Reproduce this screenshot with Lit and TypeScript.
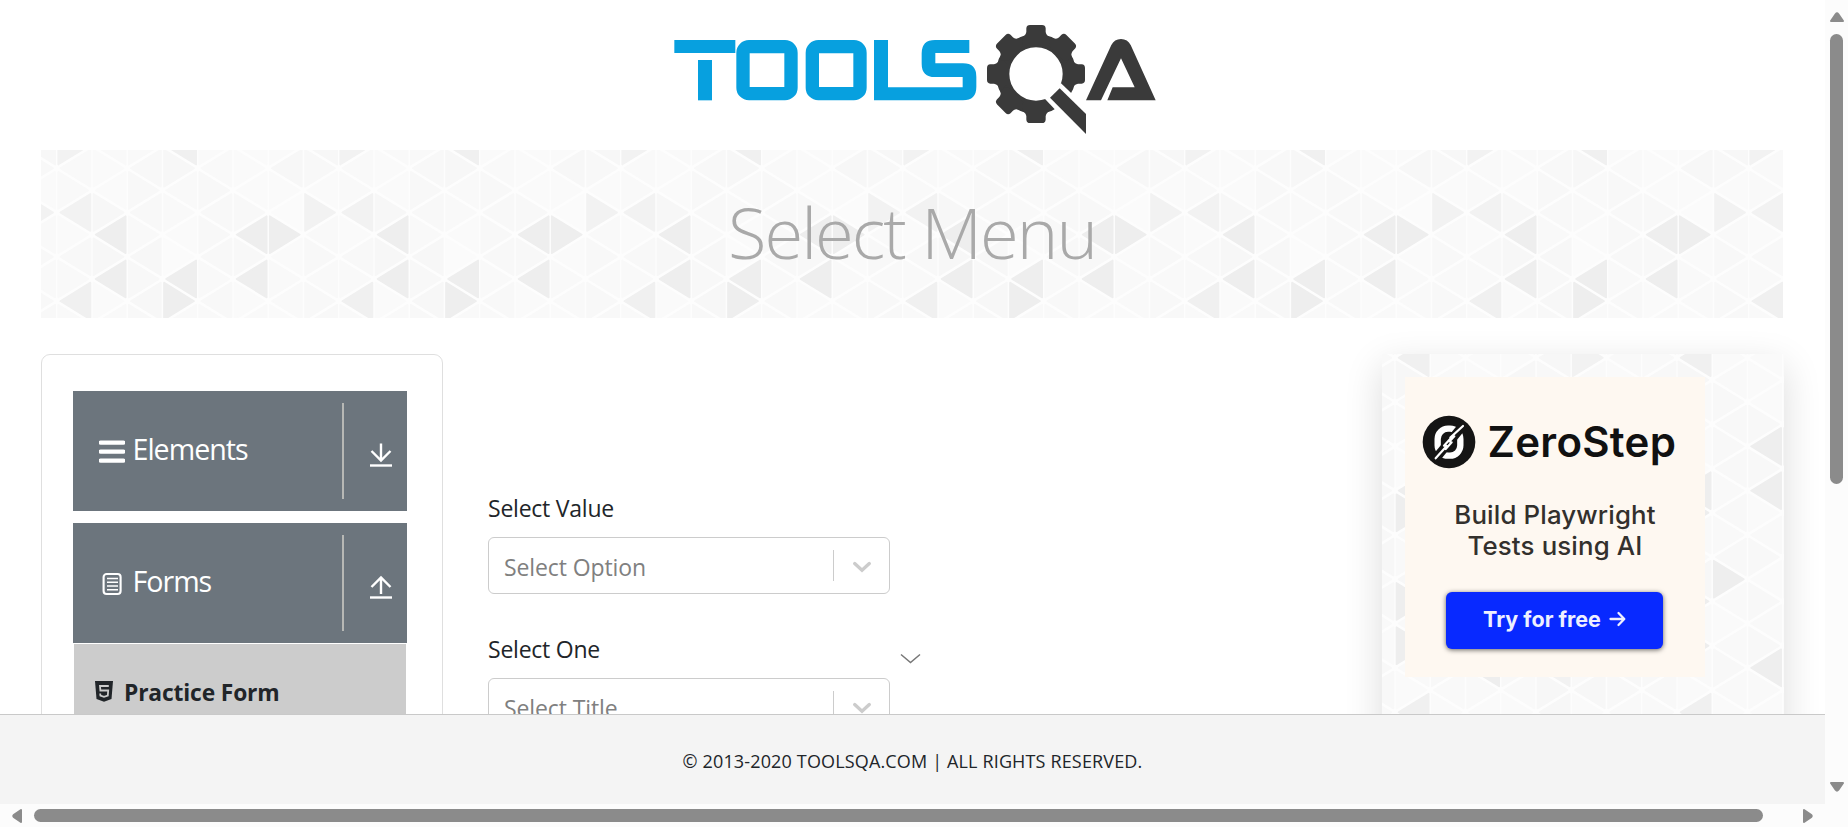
import { LitElement, html, css, svg } from "lit";
import { customElement, property } from "lit/decorators.js";

const COL = 35.25;
const ROW = 22.15;

// Shade (0 light – 9 dark) of each triangle: one string per column strip, first char is row -1.
const SHADES = [
  "62261327231313241",
  "2115848122132143",
  "2333243434232133",
  "7422108822482821",
  "1233332323821232",
  "1113838123132382",
  "1410812213241332",
  "4316232332133265",
];

@customElement("triangle-pattern")
export class TrianglePattern extends LitElement {
  @property({ type: Number }) dx = 0;
  @property({ type: Number }) dy = 0;
  @property({ type: Number }) w = 100;
  @property({ type: Number }) h = 100;

  static styles = css`
    :host { display: block; overflow: hidden; background: #fdfdfd; }
    svg { display: block; }
  `;

  render() {
    const shapes = [];
    const first = Math.floor(-this.dx / COL) - 1;
    const last = Math.ceil((this.w - this.dx) / COL);
    for (let i = first; i <= last; i++) {
      const strip = SHADES[((i % 8) + 8) % 8];
      for (let r = -2; r <= 16; r++) {
        const y = this.dy + r * ROW;
        if (y - ROW > this.h || y + ROW < 0) continue;
        const tip = this.dx + (i + ((i + r) % 2 === 0 ? 0 : 1)) * COL;
        const base = this.dx + (i + ((i + r) % 2 === 0 ? 1 : 0)) * COL;
        const s = Number(strip[(r + 1 + strip.length) % strip.length]);
        const g = s > 5 ? 244 - (s - 5) * 2 : 251 - s * 0.9;
        const d = base > tip ? 1 : -1;
        shapes.push(svg`<path d="M${tip + 3.6 * d} ${y}L${base - 1.5 * d} ${y - ROW + 3.6}V${y + ROW - 3.6}Z"
          fill="rgb(${g},${g},${g})" stroke="rgb(${g},${g},${g})" stroke-width="1.6" stroke-linejoin="round"/>`);
      }
    }
    return html`<svg width=${this.w} height=${this.h}>${shapes}</svg>`;
  }
}

@customElement("tools-logo")
export class ToolsLogo extends LitElement {
  static styles = css`
    :host { display: block; width: 510px; height: 135px; }
    svg { display: block; }
  `;
  render() {
    const teeth = [0, 45, 90, 180, 225, 270, 315];
    return html`<svg width="510" height="135" viewBox="0 0 1530 405" role="img" aria-label="ToolsQA">
      <g fill="#07a0df">
        <rect x="43" y="90" width="183" height="39" />
        <rect x="114" y="150" width="42" height="121" />
        <path d="M642 90h42v142h224v-31h-83q-40 0-40-40v-31q0-40 40-40h103v39H826v31h83q40 0 40 40v31q0 40-40 40H642Z" />
      </g>
      <g fill="none" stroke="#07a0df" stroke-width="40">
        <rect x="249" y="110" width="144" height="141" rx="18" />
        <rect x="457" y="110" width="143" height="141" rx="18" />
      </g>
      <circle cx="1128" cy="192" r="100" fill="none" stroke="#3a3a3a" stroke-width="40" />
      ${teeth.map((a) => svg`<path fill="#3a3a3a" transform="rotate(${a} 1128 192)"
        d="M1078 85 Q1097 80 1099 66 V55 Q1100 45 1110 45 H1146 Q1156 45 1157 55 V66 Q1159 80 1178 85 L1160 105 H1096Z" />`)}
      <path fill="#fff" d="M1203 220 1300 313V420L1153 265Z" />
      <path fill="#3a3a3a" d="M1199 235 1278 312V372L1170 263Z" />
      <path fill="#3a3a3a" d="M1278 271 1354 105Q1363 87 1383 87T1412 105L1487 271H1342L1358 232H1424L1383 145 1323 271Z" />
    </svg>`;
  }
}

@customElement("side-group")
export class SideGroup extends LitElement {
  @property() label = "";
  @property() icon = "menu";
  @property({ type: Boolean }) open = false;

  static styles = css`
    :host { display: flex; box-sizing: border-box; height: 120px; padding: 12px 15.5px 12px 25.5px; background: #6c757d; color: #fff; align-items: center; }
    .mark { width: 26px; height: 26px; margin-top: 2px; }
    .name { flex: 1; margin: -4px 0 0 8px; font-size: 28.6px; line-height: 40px; letter-spacing: -1px; }
    .rule { width: 2px; height: 96px; background: #b7b8b5; }
    .arrow { width: 22px; height: 26px; margin: 8px 0 0 25.5px; }
  `;

  render() {
    return html`
      <svg class="mark" viewBox="0 0 26 26">
        ${this.icon === "menu"
          ? svg`<path d="M1.5 3.7h23M1.5 12.7h23M1.5 21.7h23" stroke="#fff" stroke-width="4.2" stroke-linecap="round"/>`
          : svg`<rect x="4.6" y="3" width="17" height="20" rx="3" fill="none" stroke="#fff" stroke-width="2.1"/>
            <path d="M8 7.5h11M8 11.3h11M8 15h11M8 18.8h11" stroke="#fff" stroke-width="1.5"/>`}
      </svg>
      <span class="name">${this.label}</span>
      <span class="rule"></span>
      <svg class="arrow" viewBox="0 0 22 26" fill="none" stroke="#fff" stroke-width="2.4">
        ${this.open
          ? svg`<path d="M11 20V3.5M1.5 13 11 3.5 20.5 13"/>`
          : svg`<path d="M11 1.5V18.5M1.5 9 11 18.5 20.5 9"/>`}
        <path d="M0 23.5H22" />
      </svg>
    `;
  }
}

@customElement("select-box")
export class SelectBox extends LitElement {
  @property() placeholder = "";
  static styles = css`
    :host { display: flex; box-sizing: border-box; width: 402px; height: 57px; border: 1px solid #ccc; border-radius: 6px; align-items: center; padding-left: 15px; background: #fff; }
    .text { flex: 1; color: #808080; font-size: 23px; line-height: 32px; letter-spacing: -0.1px; margin-top: 2px; }
    .bar { width: 1px; height: 31px; background: #ccc; }
    svg { width: 20px; height: 20px; margin: 4px 17.5px 0 18px; }
  `;
  render() {
    return html`<span class="text">${this.placeholder}</span><span class="bar"></span>
      <svg viewBox="0 0 20 20"><path d="M2.7 5.6 10 12.2 17.3 5.6" fill="none" stroke="#ccc" stroke-width="3.4" stroke-linecap="round"/></svg>`;
  }
}

@customElement("zero-ad")
export class ZeroAd extends LitElement {
  static styles = css`
    :host { display: flex; flex-direction: column; box-sizing: border-box; width: 300px; height: 300px; background: #fef8f1; font-family: Inter, sans-serif; color: #111; padding-top: 38px; }
    .brand { display: flex; align-items: center; height: 54px; padding-left: 16.5px; }
    .brand svg { width: 54px; height: 54px; flex: none; }
    .brand span { margin-left: 12px; font-size: 42px; font-weight: 600; line-height: 54px; letter-spacing: 0.3px; white-space: nowrap; }
    .copy { margin-top: 30px; text-align: center; font-size: 25.8px; line-height: 31px; font-weight: 500; color: #33302d; letter-spacing: 0.15px; white-space: nowrap; }
    .go { display: flex; align-items: center; justify-content: center; box-sizing: border-box; padding-bottom: 4px; width: 217px; height: 57px; margin: 31px 0 0 41px; border-radius: 6px; background: #0829ff; box-shadow: 0 1px 5px rgba(0, 0, 0, 0.6); color: #eef0ff; font-size: 21.5px; font-weight: 700; gap: 8px; }
    .go svg { width: 17px; height: 16px; }
  `;
  render() {
    return html`
      <div class="brand">
        <svg viewBox="-81 -81 162 162">
          <circle r="79" fill="#151515" />
          <rect x="-34" y="-40" width="68" height="81" rx="31" fill="none" stroke="#fff" stroke-width="19" />
          <path d="M-42 52 44 -52" stroke="#151515" stroke-width="27" />
          <path d="M-40 49-7 12M-15 11 4-10M2-2 16-17M4-13 42-48M8 1-10 21" stroke="#fff" stroke-width="6.5" stroke-linecap="round" />
        </svg>
        <span>ZeroStep</span>
      </div>
      <div class="copy">Build Playwright<br />Tests using AI</div>
      <div class="go"><span>Try for free</span>
        <svg viewBox="0 0 17 16" fill="none" stroke="#eef0ff" stroke-width="2.3" stroke-linecap="round" stroke-linejoin="round"><path d="M1.5 8H15M9.5 2 15.3 8 9.5 14"/></svg>
      </div>`;
  }
}

@customElement("app-root")
export class AppRoot extends LitElement {
  static styles = css`
    :host { display: grid; grid-template: 804px 23px / 1825px 23px; width: 1848px; height: 827px; overflow: hidden; background: #fff; color: #212529; font-family: "Open Sans", "Noto Sans", sans-serif; }
    .view { display: flex; flex-direction: column; overflow: hidden; background: #fff; }
    .page { height: 714px; overflow: hidden; box-sizing: border-box; padding: 10px 41px 0; }
    .logo { margin-left: 619px; margin-bottom: 5px; }
    .banner { display: grid; width: 1742px; height: 168px; }
    .banner > * { grid-area: 1 / 1; }
    .banner h1 { margin: 0 0 4px; align-self: center; text-align: center; font-size: 70.5px; font-weight: 300; line-height: 90px; color: #a9a9a9; letter-spacing: -2px; z-index: 1; }
    .cols { display: flex; margin-top: 36px; width: 1743px; }
    .side { box-sizing: border-box; width: 402px; height: 500px; border: 1px solid #dfdfdf; border-radius: 9px; padding: 36px 35px 0 31px; }
    .side side-group + side-group { margin-top: 12px; }
    .list { display: flex; align-items: center; margin: 1px 1px 0; height: 98px; background: #ccc; padding-left: 21px; }
    .list svg { width: 18px; height: 21px; margin-top: -3px; }
    .list b { margin-left: 11px; font-size: 22.8px; font-weight: 700; line-height: 32px; letter-spacing: -0.15px; }
    .main { width: 939px; padding: 138px 0 0 45px; box-sizing: border-box; }
    .lab { height: 32px; font-size: 23px; line-height: 32px; letter-spacing: -0.23px; margin-bottom: 13px; }
    .second { display: flex; margin-top: 39px; }
    .second .field { width: 402px; }
    .second > svg { width: 21px; height: 12px; margin: 20px 0 0 9.5px; }
    .ad { display: grid; width: 402px; height: 500px; box-shadow: 0 12px 36px rgba(0, 0, 0, 0.14); }
    .ad > * { grid-area: 1 / 1; }
    .ad zero-ad { margin: 23px 0 0 23px; z-index: 1; }
    footer { height: 90px; box-sizing: border-box; border-top: 1px solid #c9c9c9; background: #f4f4f4; text-align: center; font-size: 18px; line-height: 24px; padding-top: 34px; letter-spacing: 0.15px; }
    .v, .h, .corner { background: #fcfcfc; }
    .v { display: flex; flex-direction: column; align-items: center; padding-top: 11px; box-sizing: border-box; }
    .v i { width: 13px; height: 450px; border-radius: 6.5px; background: #8b8b8b; margin: 11px 0 297px; }
    .h { display: flex; align-items: center; box-sizing: border-box; padding-left: 11px; }
    .h i { width: 1729px; height: 13px; border-radius: 6.5px; background: #8b8b8b; margin: 0 39px 0 11px; }
    .v svg, .h svg { flex: none; fill: #8b8b8b; stroke: #8b8b8b; stroke-width: 2; stroke-linejoin: round; }
  `;

  render() {
    return html`
      <div class="view">
        <div class="page">
          <tools-logo class="logo"></tools-logo>
          <div class="banner">
            <triangle-pattern dx="15.7" dy="18.2" w="1742" h="168"></triangle-pattern>
            <h1>Select Menu</h1>
          </div>
          <div class="cols">
            <div class="side">
              <side-group label="Elements" icon="menu"></side-group>
              <side-group label="Forms" icon="doc" open></side-group>
              <div class="list">
                <svg viewBox="0 0 18 21">
                  <path d="M0 0H18L16.5 18 9 20.7 1.5 18Z" fill="#212529" />
                  <path d="M13.8 5H5L5.4 9.5H13.2L12.8 14.5 9 15.8 5.4 14.5 5.2 12.5" fill="none" stroke="#ccc" stroke-width="1.8" />
                </svg>
                <b>Practice Form</b>
              </div>
            </div>
            <div class="main">
              <div class="lab">Select Value</div>
              <select-box placeholder="Select Option"></select-box>
              <div class="second">
                <div class="field">
                  <div class="lab">Select One</div>
                  <select-box placeholder="Select Title"></select-box>
                </div>
                <svg viewBox="0 0 21 12"><path d="M1 1.5 10.5 9.5 20 1.5" fill="none" stroke="#777" stroke-width="1.5" /></svg>
              </div>
            </div>
            <div class="ad">
              <triangle-pattern dx="-92.8" dy="25.9" w="402" h="500"></triangle-pattern>
              <zero-ad></zero-ad>
            </div>
          </div>
        </div>
        <footer>© 2013-2020 TOOLSQA.COM | ALL RIGHTS RESERVED.</footer>
      </div>
      <div class="v">
        <svg width="14" height="12" viewBox="0 0 14 12"><path d="M1 10 5.8 3Q7 1.5 8.2 3L13 10Z" /></svg>
        <i></i>
        <svg width="14" height="12" viewBox="0 0 14 12"><path d="M1 2 5.8 9Q7 10.5 8.2 9L13 2Z" /></svg>
      </div>
      <div class="h">
        <svg width="12" height="14" viewBox="0 0 12 14"><path d="M10 1 3 5.8Q1.5 7 3 8.2L10 13Z" /></svg>
        <i></i>
        <svg width="12" height="14" viewBox="0 0 12 14"><path d="M2 1 9 5.8Q10.5 7 9 8.2L2 13Z" /></svg>
      </div>
      <div class="corner"></div>
    `;
  }
}
